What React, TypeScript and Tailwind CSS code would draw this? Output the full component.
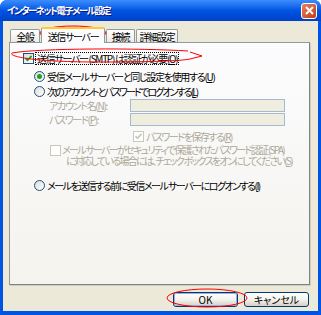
import React from "react";

function CheckBox({ checked, disabled }: { checked?: boolean; disabled?: boolean }) {
    return (
        <span
            className={
                "inline-flex shrink-0 items-center justify-center w-[11px] h-[11px] border " +
                (disabled ? "border-[#CAC8BB] bg-white" : "border-[#1C5180] bg-gradient-to-br from-[#DCDCD7] to-white")
            }
        >
            {checked && (
                <svg width="9" height="9" viewBox="0 0 9 9">
                    <path d="M1.5 4.2 L3.5 6.3 L7.6 1.8" fill="none" stroke={disabled ? "#CAC8BB" : "#21A121"} strokeWidth="1.8" />
                </svg>
            )}
        </span>
    );
}

function Radio({ checked }: { checked?: boolean }) {
    return (
        <span className="inline-flex shrink-0 items-center justify-center w-[11px] h-[11px] rounded-full border border-[#1C5180] bg-gradient-to-br from-[#DCDCD7] to-white">
            {checked && <span className="w-[5px] h-[5px] rounded-full bg-[#21A121]" />}
        </span>
    );
}

function Tab({ label, active, w }: { label: string; active?: boolean; w: string }) {
    return (
        <div
            className={
                "flex items-center justify-center border border-b-0 rounded-t-[2px] " + w + " " +
                (active
                    ? "h-[16px] bg-[#FCFCFE] border-[#919B9C] border-t-[2px] border-t-[#FFC83C] -mb-px z-10"
                    : "h-[13px] bg-gradient-to-b from-white to-[#ECEBE6] border-[#919B9C]")
            }
        >
            {label}
        </div>
    );
}

function Btn({ label, isDefault }: { label: string; isDefault?: boolean }) {
    return (
        <div className="w-[65px] h-[15px] rounded-[3px] border border-[#003C74] bg-gradient-to-b from-white via-[#F4F3EE] to-[#D6D0C5] flex items-center justify-center">
            <div
                className={
                    "w-full h-full rounded-[2px] flex items-center justify-center " +
                    (isDefault ? "border border-[#97AEE2]" : "")
                }
            >
                {label}
            </div>
        </div>
    );
}

export default function App() {
    return (
        <div
            className="relative w-[321px] h-[315px] overflow-hidden bg-[#0054E3] rounded-t-[7px] flex flex-col text-[10px] leading-[11px] tracking-[-1.3px] whitespace-nowrap text-black [font-feature-settings:'palt']"
            style={{ fontFamily: '"Noto Sans CJK JP", "Noto Sans", sans-serif' }}
        >
            <div className="h-[21px] shrink-0 flex items-center justify-between pl-[7px] pr-[4px] bg-gradient-to-b from-[#3B8DFF] via-[#0054E3] to-[#0041C8]">
                <span className="text-white font-bold text-[9.5px] tracking-[-1.6px] [text-shadow:1px_1px_#0A1883]">
                    インターネット電子メール設定
                </span>
                <div className="w-[16px] h-[16px] rounded-[3px] border border-white bg-gradient-to-br from-[#E8805E] to-[#C23A12] flex items-center justify-center">
                    <svg width="9" height="9" viewBox="0 0 9 9">
                        <path d="M1 1 L8 8 M8 1 L1 8" stroke="white" strokeWidth="2" />
                    </svg>
                </div>
            </div>

            <div className="flex-1 mx-[3px] mb-[4px] bg-[#ECE9D8] flex flex-col pl-[6px] pr-[8px] pt-[6px]">
                <div className="flex items-end gap-px h-[15px] pl-[1px]">
                    <Tab label="全般" w="w-[30px]" />
                    <Tab label="送信サーバー" active w="w-[64px]" />
                    <Tab label="接続" w="w-[29px]" />
                    <Tab label="詳細設定" w="w-[42px]" />
                </div>
                <div className="h-[243px] border border-[#919B9C] border-r-[#7B8586] border-b-[#7B8586] bg-gradient-to-b from-[#FCFCFE] to-[#F4F3EE] flex flex-col pl-[13px] pt-[8px] shadow-[1px_1px_0_#D0CEBF]">
                    <div className="flex items-center h-[14px] gap-[1px]">
                        <CheckBox checked />
                        <span className="border border-dotted border-black px-px leading-[11px]">
                            送信サーバー (SMTP) は認証が必要(<u>O</u>)
                        </span>
                    </div>
                    <div className="flex flex-col pl-[11px]">
                        <div className="flex items-center h-[14px] gap-[2px] mt-[4px]">
                            <Radio checked />
                            <span>受信メール サーバーと同じ設定を使用する(<u>U</u>)</span>
                        </div>
                        <div className="flex items-center h-[14px] gap-[2px] mt-[1px]">
                            <Radio />
                            <span className="tracking-[-1.9px]">次のアカウントとパスワードでログオンする(<u>L</u>)</span>
                        </div>
                        <div className="flex flex-col pl-[15px] text-[#ACA899]">
                            <div className="flex items-center h-[13px] mt-[1px]">
                                <span className="w-[81px]">アカウント名(<u>N</u>):</span>
                                <div className="w-[155px] h-[13px] border border-[#A7B9CF] bg-[#EFEDDE]" />
                            </div>
                            <div className="flex items-center h-[13px] mt-[1px]">
                                <span className="w-[81px]">パスワード(<u>P</u>):</span>
                                <div className="w-[155px] h-[13px] border border-[#A7B9CF] bg-[#EFEDDE]" />
                            </div>
                            <div className="flex items-center h-[14px] mt-[3px] pl-[84px] gap-[2px]">
                                <CheckBox checked disabled />
                                <span className="tracking-[-1.5px]">パスワードを保存する(<u>R</u>)</span>
                            </div>
                            <div className="flex items-start mt-[1px] pl-[1px] gap-[1px]">
                                <div className="pt-[1px]">
                                    <CheckBox disabled />
                                </div>
                                <div className="flex flex-col leading-[11px] tracking-[-1.7px]">
                                    <span>メール サーバーがセキュリティで保護されたパスワード認証 (SPA)</span>
                                    <span className="pl-[4px]">に対応している場合には、チェック ボックスをオンにしてください(<u>S</u>)</span>
                                </div>
                            </div>
                        </div>
                        <div className="flex items-center h-[14px] gap-[2px] mt-[12px]">
                            <Radio />
                            <span className="tracking-[-1.5px]">メールを送信する前に受信メール サーバーにログオンする(<u>I</u>)</span>
                        </div>
                    </div>
                </div>
                <div className="flex justify-end gap-[6px] mt-[7px] pr-px tracking-normal">
                    <Btn label="OK" isDefault />
                    <Btn label="キャンセル" />
                </div>
            </div>

            <svg className="absolute inset-0 pointer-events-none" width="321" height="315" viewBox="0 0 321 315">
                <ellipse cx="73" cy="33" rx="33" ry="7" fill="none" stroke="#FF0000" strokeWidth="1" />
                <path d="M188 51 C140 48 40 48 12 53 C8 56 30 62 100 62 C150 62 180 61 190 59 L202 56 L190 52" fill="none" stroke="#FF0000" strokeWidth="1" />
                <ellipse cx="207" cy="298" rx="40" ry="9" fill="none" stroke="#FF0000" strokeWidth="1" />
            </svg>
        </div>
    );
}
